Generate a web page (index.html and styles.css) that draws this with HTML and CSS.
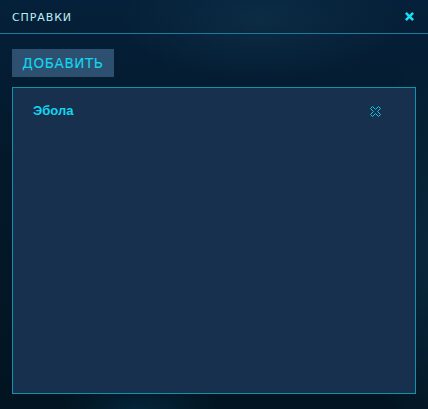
FILE: index.html
```html
<!DOCTYPE html>
<html lang="ru">
<head>
<meta charset="utf-8">
<title>Справки</title>
<link rel="stylesheet" href="styles.css">
</head>
<body>
<div class="dialog">
  <header class="dialog-header">
    <span class="dialog-title">СПРАВКИ</span>
    <button class="close-btn" aria-label="Закрыть">
      <svg width="9" height="9" viewBox="0 0 10 10"><polygon points="2,0 5,3 8,0 10,2 7,5 10,8 8,10 5,7 2,10 0,8 3,5 0,2" fill="#19e0f5"/></svg>
    </button>
  </header>
  <main class="dialog-body">
    <button class="add-btn">ДОБАВИТЬ</button>
    <section class="list-panel">
      <div class="list-row">
        <span class="list-name">Эбола</span>
        <button class="remove-btn" aria-label="Удалить">
          <svg width="11" height="11" viewBox="0 0 11 11"><polygon points="2.5,0.5 5.5,3.5 8.5,0.5 10.5,2.5 7.5,5.5 10.5,8.5 8.5,10.5 5.5,7.5 2.5,10.5 0.5,8.5 3.5,5.5 0.5,2.5" fill="none" stroke="#14c6e2" stroke-width="1"/></svg>
        </button>
      </div>
    </section>
  </main>
</div>
</body>
</html>
```
FILE: styles.css
```css
html, body {
  margin: 0;
  padding: 0;
  width: 428px;
  height: 409px;
  overflow: hidden;
}
body {
  background:
    radial-gradient(ellipse 140px 60px at 260px 20px, rgba(16,52,76,0.6), rgba(16,52,76,0) 100%),
    radial-gradient(ellipse 60px 200px at 428px 250px, rgba(10,44,66,0.8), rgba(10,44,66,0) 100%),
    radial-gradient(ellipse 80px 30px at 140px 409px, rgba(4,40,62,0.8), rgba(4,40,62,0) 100%),
    linear-gradient(180deg, #05203a 0%, #03192a 40%, #021421 100%);
  font-family: "DejaVu Sans", "Liberation Sans", sans-serif;
}
.dialog {
  display: flex;
  flex-direction: column;
  height: 409px;
}
.dialog-header {
  height: 34px;
  box-sizing: border-box;
  display: flex;
  align-items: center;
  justify-content: space-between;
  padding: 0 14px 0 12px;
  border-bottom: 1px solid #1a7d98;
}
.dialog-title {
  color: #bdeef4;
  font-size: 11px;
  letter-spacing: 0.9px;
  line-height: 1;
  padding-top: 1px;
}
.close-btn {
  background: none;
  border: 0;
  padding: 0;
  width: 9px;
  height: 9px;
  display: flex;
  cursor: pointer;
}
.dialog-body {
  padding: 15px 12px 15px 12px;
  display: flex;
  flex-direction: column;
  align-items: flex-start;
  gap: 10px;
}
.add-btn {
  height: 28px;
  width: 102px;
  box-sizing: border-box;
  background: #2e5070;
  border: 0;
  padding: 0;
  color: #12d5ee;
  font-family: "DejaVu Sans", sans-serif;
  font-size: 13.5px;
  letter-spacing: 0.6px;
  line-height: 28px;
  text-align: center;
  -webkit-text-stroke: 0.1px #12d5ee;
  cursor: pointer;
}
.list-panel {
  width: 404px;
  height: 307px;
  box-sizing: border-box;
  background: #16304e;
  border: 1px solid #1591ad;
}
.list-row {
  display: flex;
  align-items: center;
  justify-content: space-between;
  padding: 13px 34px 11px 20px;
  height: 20px;
}
.list-name {
  color: #14d4ef;
  font-family: "Liberation Sans", Arial, sans-serif;
  font-weight: bold;
  font-size: 13px;
  line-height: 20px;
}
.remove-btn {
  background: none;
  border: 0;
  padding: 0;
  width: 11px;
  height: 11px;
  display: flex;
  cursor: pointer;
}
```
